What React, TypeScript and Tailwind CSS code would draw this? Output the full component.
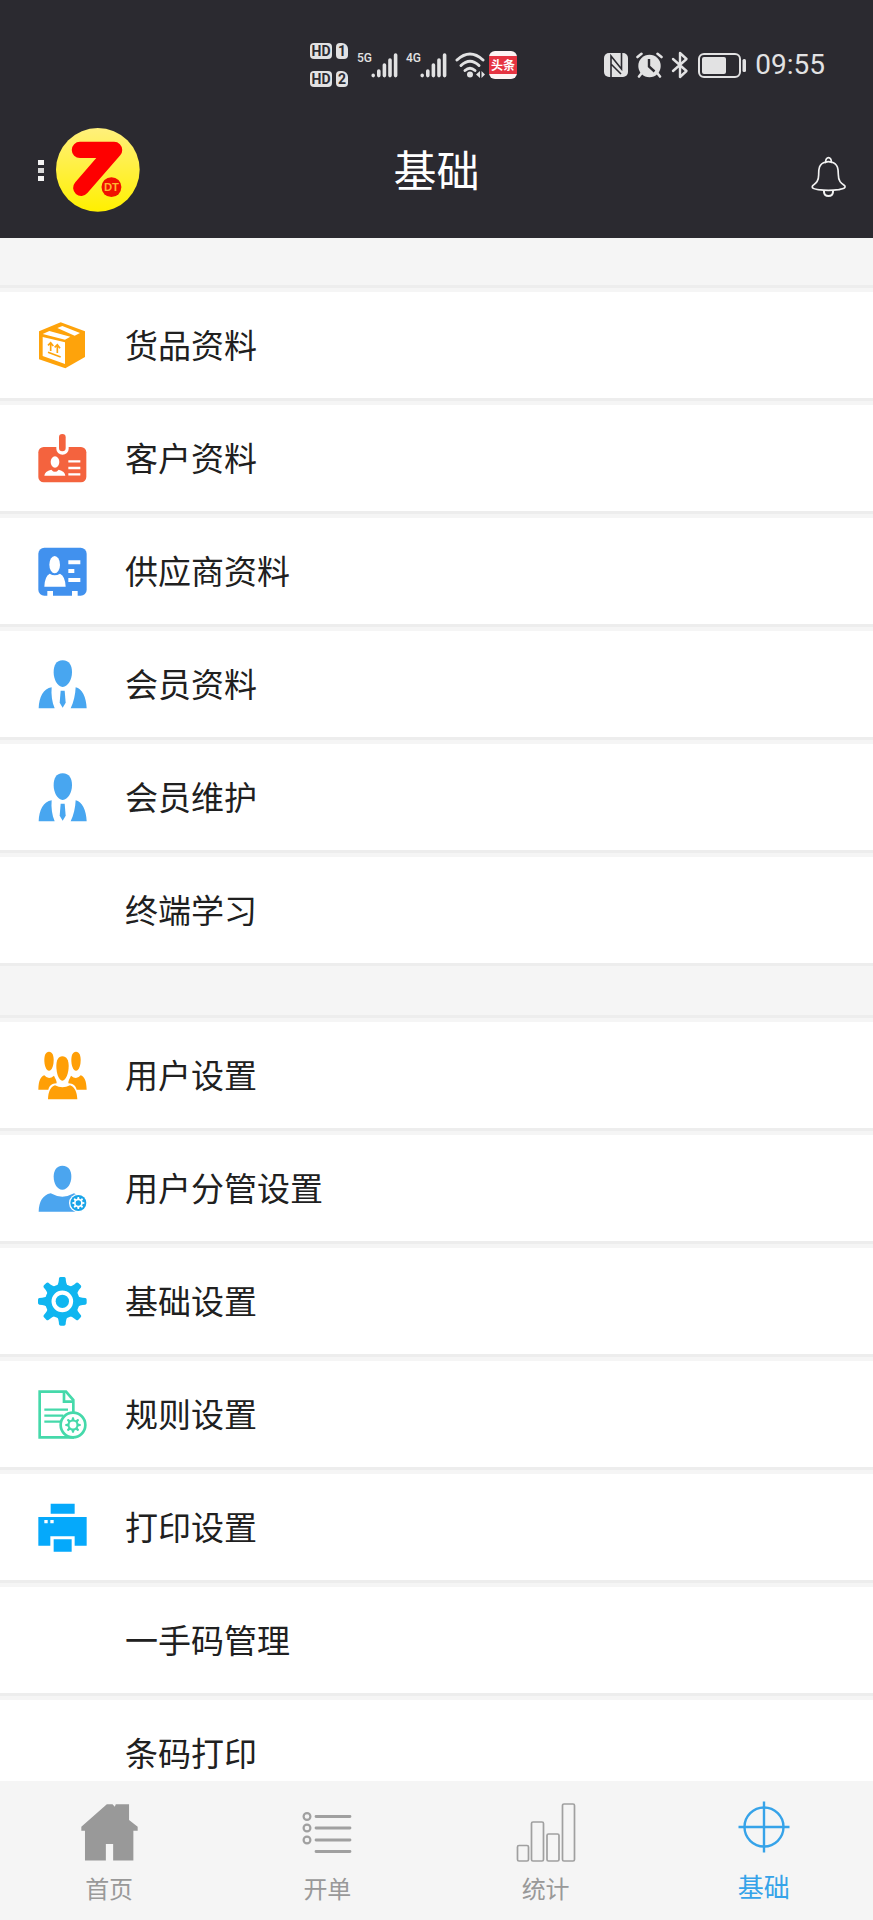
import { FC, ReactNode } from "react";

interface IconProps {
  children: ReactNode
}

const MenuIcon: FC<IconProps> = ({ children }) => (
  <svg viewBox="0 0 147 147" className="size-[49px] shrink-0" aria-hidden="true">
    {children}
  </svg>
);

interface GearProps {
  cx: number
  cy: number
  scale: number
  color: string
}

const ANGLES = [0, 45, 90, 135, 180, 225, 270, 315];

const GearShape: FC<GearProps> = ({ cx, cy, scale, color }) => (
  <g transform={`translate(${cx} ${cy}) scale(${scale})`}>
    <circle r="42" fill="none" stroke={color} strokeWidth="19" />
    {ANGLES.map((angle) => (
      <path
        key={angle}
        transform={`rotate(${angle})`}
        d="M-17 -46 Q-11 -50 -10 -69 Q-9 -73 -5 -73 H5 Q9 -73 10 -69 Q11 -50 17 -46Z"
        fill={color}
      />
    ))}
  </g>
);

const GoodsIcon = () => (
  <MenuIcon>
    <path d="M68 4 L141 31 V108 L82 142 L3 115 V31Z" fill="#fea30b" />
    <path d="M14 48 L81 64 V129 L14 105Z" fill="#fff" />
    <path d="M14 39 L34 30 L97 47 L81 56Z M58 21 L73 15 L126 36 L110 44Z" fill="#fff" />
    <g stroke="#fea30b" strokeWidth="5" fill="none">
      <path d="M38 90 V66 M30 73 L38 65 L46 75 M58 96 V73 M50 79 L58 71 L66 82 M30 94 L68 108" />
    </g>
  </MenuIcon>
);

const CustomerIcon = () => (
  <MenuIcon>
    <rect x="1" y="39" width="144" height="106" rx="16" fill="#f4633e" />
    <path d="M55 36 H92 V44 A18 18 0 0 1 55 44Z" fill="#fff" />
    <rect x="63" y="0" width="20" height="52" rx="10" fill="#f4633e" />
    <ellipse cx="51" cy="84" rx="13" ry="17" fill="#fff" />
    <path d="M19 125 Q20 112 40 107 Q51 120 62 107 Q81 112 82 125Z" fill="#fff" />
    <path d="M91 82 H127 M91 102 H127 M91 121 H127" stroke="#fff" strokeWidth="7" />
  </MenuIcon>
);

const SupplierIcon = () => (
  <MenuIcon>
    <rect x="1" y="2" width="145" height="144" rx="18" fill="#4191ee" />
    <ellipse cx="50" cy="53" rx="16" ry="26" fill="#fff" />
    <path d="M19 119 Q20 88 35 80 Q50 90 66 80 Q82 88 83 119Z" fill="#fff" />
    <path d="M91 46 H127 M91 72 H109 M91 99 H127" stroke="#fff" strokeWidth="12" />
    <path d="M28 132 H45 V147 H28Z M102 132 H119 V147 H102Z" fill="#fff" />
  </MenuIcon>
);

const MemberIcon = () => (
  <MenuIcon>
    <g fill="#48a6f0">
      <path d="M74 1 C94 1 102 17 102 37 C102 58 90 81 74 81 C58 81 47 58 47 37 C47 17 54 1 74 1Z" />
      <path d="M2 145 C3 112 16 86 41 82 C39 104 42 127 50 145Z" />
      <path d="M146 145 C145 112 132 86 113 82 C112 104 107 127 98 145Z" />
      <path d="M68 92 H80 L83 128 L74 143 L65 128Z" />
    </g>
  </MenuIcon>
);

const UsersIcon = () => (
  <MenuIcon>
    <g fill="#ff9f06">
      <path d="M33 2 C43 2 47 13 47 27 C47 43 42 59 33 59 C24 59 19 43 19 27 C19 13 23 2 33 2Z" />
      <path d="M114 2 C124 2 128 13 128 27 C128 43 123 59 114 59 C105 59 100 43 100 27 C100 13 104 2 114 2Z" />
      <path d="M73 16 C86 16 92 28 92 45 C92 66 84 89 73 89 C62 89 55 66 55 45 C55 28 61 16 73 16Z" />
      <path d="M1 116 C2 88 8 77 19 73 Q32 89 48 74 C52 83 57 90 56 97 C41 98 35 103 31 116Z" />
      <path d="M146 116 C145 88 139 77 128 73 Q115 89 99 74 C95 83 90 90 91 97 C106 98 112 103 116 116Z" />
      <path d="M30 145 C31 122 37 108 51 103 Q73 115 96 103 C110 108 117 122 118 145Z" />
    </g>
  </MenuIcon>
);

const UserGearIcon = () => (
  <MenuIcon>
    <path d="M73 5 C93 5 100 20 100 38 C100 57 89 77 73 77 C57 77 47 57 47 38 C47 20 55 5 73 5Z" fill="#4ba5ef" />
    <path d="M2 143 C3 113 14 93 38 88 Q73 108 108 88 L130 100 V143Z" fill="#4ba5ef" />
    <circle cx="121" cy="117" r="28" fill="#fff" />
    <circle cx="121" cy="117" r="24" fill="#19a4e8" />
    <GearShape cx={121} cy={117} scale={0.25} color="#fff" />
  </MenuIcon>
);

const SettingsIcon = () => (
  <MenuIcon>
    <GearShape cx={73} cy={73} scale={1} color="#10b6f0" />
    <circle cx="73" cy="73" r="20" fill="#10b6f0" />
  </MenuIcon>
);

const RuleIcon = () => (
  <MenuIcon>
    <g fill="none" stroke="#45d9aa" strokeWidth="8">
      <path d="M108 142 H5 V5 H84 L106 30 V68" />
      <path d="M78 5 V35 H106" />
      <path d="M19 59 H90 M19 77 H76 M19 95 H66" strokeWidth="7" />
      <circle cx="105" cy="105" r="37" fill="#fff" />
    </g>
    <GearShape cx={105} cy={105} scale={0.32} color="#45d9aa" />
  </MenuIcon>
);

const PrinterIcon = () => (
  <MenuIcon>
    <g fill="#05a9fb">
      <path d="M38 2 H110 V32 H38Z M1 42 H146 V128 H110 V100 H37 V128 H1Z M47 109 H101 V146 H47Z" />
    </g>
    <path d="M19 51 H29 V61 H19Z M37 51 H47 V61 H37Z" fill="#fff" />
  </MenuIcon>
);

interface MenuItem {
  label: string
  icon?: ReactNode
}

const archiveItems: MenuItem[] = [
  { label: "货品资料", icon: <GoodsIcon /> },
  { label: "客户资料", icon: <CustomerIcon /> },
  { label: "供应商资料", icon: <SupplierIcon /> },
  { label: "会员资料", icon: <MemberIcon /> },
  { label: "会员维护", icon: <MemberIcon /> },
  { label: "终端学习" },
];

const settingItems: MenuItem[] = [
  { label: "用户设置", icon: <UsersIcon /> },
  { label: "用户分管设置", icon: <UserGearIcon /> },
  { label: "基础设置", icon: <SettingsIcon /> },
  { label: "规则设置", icon: <RuleIcon /> },
  { label: "打印设置", icon: <PrinterIcon /> },
  { label: "一手码管理" },
  { label: "条码打印" },
];

const MenuList: FC<{ items: MenuItem[] }> = ({ items }) => (
  <ul className="border-t-3 border-[#ededed]">
    {items.map((item) => (
      <li key={item.label} className="mt-1 border-b-3 border-[#ededed] bg-white">
        <a href="#" className="flex h-[106px] items-center gap-[38px] pl-[38px] text-[33px] leading-10 text-[#202020]">
          {item.icon ?? <span className="size-[49px] shrink-0" />}
          <span className="pb-[3px]">{item.label}</span>
        </a>
      </li>
    ))}
  </ul>
);

const HdBadge: FC<{ sim: string }> = ({ sim }) => (
  <div className="flex gap-1 font-[Roboto,sans-serif] text-sm leading-4 font-bold text-[#2b2a30]">
    <span className="w-[22px] rounded-sm bg-[#e2e2e3] text-center">HD</span>
    <span className="w-3 rounded-sm rounded-tr-md bg-[#e2e2e3] text-center">{sim}</span>
  </div>
);

const Signal: FC<{ network: string }> = ({ network }) => (
  <div className="flex h-[26px] items-start">
    <span className="w-[14px] font-[Roboto,sans-serif] text-xs leading-3 font-medium">{network}</span>
    <svg viewBox="0 0 27 26" className="h-[26px] w-[27px]" aria-hidden="true">
      <g stroke="currentColor" strokeWidth="3.6" strokeLinecap="round">
        <path d="M2.2 23.4 V23.6 M7.8 19 V23.6 M13.4 13 V23.6 M19 8 V23.6 M24.6 3 V23.6" />
      </g>
    </svg>
  </div>
);

const StatusBar = () => (
  <div className="flex h-[74px] items-center justify-between pr-[48px] pl-[310px] text-[#e2e2e3]">
    <div className="flex items-center gap-2">
      <div className="mr-px flex flex-col gap-3">
        <HdBadge sim="1" />
        <HdBadge sim="2" />
      </div>
      <Signal network="5G" />
      <Signal network="4G" />
      <svg viewBox="0 0 30 26" className="h-[26px] w-[30px]" aria-hidden="true">
        <g fill="none" stroke="currentColor" strokeWidth="3" strokeLinecap="round">
          <path d="M2 8 Q15 -4 28 8" />
          <path d="M6 13.5 Q15 5 24 13.5" />
          <path d="M10 18.5 Q15 14 20 18.5" />
        </g>
        <circle cx="15" cy="22.5" r="3" fill="currentColor" />
        <path d="M25 19 V26 L21 22.5Z M26.5 19 L30 22.5 L26.5 26Z" fill="currentColor" />
      </svg>
      <span className="-ml-1 flex size-7 items-center rounded-md bg-[#fdf3f3]">
        <span className="w-full bg-[#e63341] text-center text-xs leading-[18px] font-bold text-white">头条</span>
      </span>
    </div>
    <div className="flex items-center gap-2">
      <svg viewBox="0 0 24 26" className="h-[26px] w-6" aria-hidden="true">
        <rect x="0" y="1" width="24" height="24" rx="5" fill="currentColor" />
        <path d="M7 25 V4 L17.5 17 V1 M7 12 L17 22" fill="none" stroke="#2b2a30" strokeWidth="1.6" />
      </svg>
      <svg viewBox="0 0 27 26" className="h-[26px] w-[27px]" aria-hidden="true">
        <circle cx="13.5" cy="14" r="11.2" fill="currentColor" />
        <path d="M1.5 5 L5.5 1.8 M21.5 1.8 L25.5 5 M5 22 L3 24.5 M22 22 L24 24.5" stroke="currentColor" strokeWidth="2.6" strokeLinecap="round" />
        <path d="M13 7 V14.5 L18.5 19.5" fill="none" stroke="#2b2a30" strokeWidth="2.4" />
      </svg>
      <svg viewBox="0 0 18 28" className="h-7 w-[18px]" aria-hidden="true">
        <path d="M2 8 L15.5 20 L9 26 V2 L15.5 8 L2 20" fill="none" stroke="currentColor" strokeWidth="2.4" strokeLinecap="round" strokeLinejoin="round" />
      </svg>
      <svg viewBox="0 0 50 26" className="h-[26px] w-[50px]" aria-hidden="true">
        <rect x="2" y="2" width="41" height="23" rx="5" fill="none" stroke="currentColor" strokeWidth="2" />
        <rect x="5" y="5" width="24" height="17" rx="2" fill="currentColor" />
        <rect x="45.5" y="7" width="3.5" height="13" rx="1.5" fill="currentColor" />
      </svg>
      <time className="font-[Roboto,sans-serif] text-[28px] leading-8">09:55</time>
    </div>
  </div>
);

const Logo = () => (
  <svg viewBox="0 0 253 253" className="size-[84px]" aria-hidden="true">
    <defs>
      <linearGradient id="logo-bg" x1="0" y1="0" x2="0" y2="1">
        <stop offset="0" stopColor="#fff07c" />
        <stop offset="1" stopColor="#fff000" />
      </linearGradient>
    </defs>
    <circle cx="126" cy="126" r="126" fill="url(#logo-bg)" />
    <path d="M72 66 H175 L76 180" fill="none" stroke="#fe0000" strokeWidth="49" strokeLinecap="round" strokeLinejoin="round" />
    <path d="M160 66 H175 L76 180 L110 110Z" fill="#fe0000" />
    <circle cx="167" cy="178" r="30" fill="#f01000" />
    <text x="167" y="190" textAnchor="middle" fontSize="34" fontWeight="700" className="font-['Liberation_Sans',sans-serif]" fill="#ffb52e">DT</text>
  </svg>
);

const Header = () => (
  <header className="shrink-0 bg-[#2b2a30] pt-7">
    <StatusBar />
    <div className="grid h-[136px] grid-cols-3 items-center">
      <button type="button" aria-label="菜单" className="ml-[38px] flex items-center gap-3 justify-self-start">
        <span className="flex flex-col gap-[3px]">
          <span className="h-[5px] w-[6px] bg-[#f3f3f3]" />
          <span className="h-[5px] w-[6px] bg-[#d8d8d8]" />
          <span className="h-[5px] w-[6px] bg-[#f3f3f3]" />
        </span>
        <Logo />
      </button>
      <h1 className="pb-1 text-center text-[43px] leading-[50px] text-white">基础</h1>
      <button type="button" aria-label="消息" className="mr-[27px] justify-self-end pt-3">
        <svg viewBox="0 0 105 123" className="h-[41px] w-[35px]" fill="none" stroke="#f2f2f2" strokeWidth="5" aria-hidden="true">
          <path d="M44 18 C22 23 23 43 23 56 C23 77 14 82 5 89 C0 98 12 99 22 101 Q52 105 83 101 C93 99 106 98 101 89 C91 82 82 77 82 56 C82 43 82 23 61 18" />
          <path d="M44 19 C43 0 62 0 61 19 Q52 15 44 19Z" />
          <path d="M39 103 V108 C40 124 65 124 66 108 V103" strokeWidth="6" />
        </svg>
      </button>
    </div>
  </header>
);

const TabHomeIcon = () => (
  <svg viewBox="0 0 172 174" className="h-[58px] w-[57px]" fill="#999" aria-hidden="true">
    <path d="M78 3 H95 L102 11 L105 3 H145 V51 L171 71 V83 H158 V173 H97 V123 H75 V173 H12 V83 H1 V71Z" />
  </svg>
);

const TabOrderIcon = () => (
  <svg viewBox="0 0 50 58" className="h-[58px] w-[50px]" fill="none" stroke="#a0a0a0" strokeLinecap="round" aria-hidden="true">
    <path d="M14 13.5 H48 M14 25 H48 M14 37 H48 M14 48.5 H48" strokeWidth="2.8" />
    <g strokeWidth="2.2">
      <circle cx="5" cy="13.5" r="3.4" />
      <circle cx="5" cy="25" r="3.4" />
      <circle cx="5" cy="37" r="3.4" />
    </g>
  </svg>
);

const TabStatsIcon = () => (
  <svg viewBox="0 0 60 60" className="h-[60px] w-[60px]" fill="none" stroke="#a0a0a0" strokeWidth="1.7" aria-hidden="true">
    <rect x="1.5" y="43.5" width="11" height="15.5" rx="1.5" />
    <rect x="15.5" y="20" width="12" height="39" rx="1.5" />
    <rect x="31" y="32" width="12" height="27" rx="1.5" />
    <rect x="46.5" y="2" width="12" height="57" rx="1.5" />
  </svg>
);

const TabBaseIcon = () => (
  <svg viewBox="0 0 52 52" className="size-[52px]" fill="none" stroke="#36a3e9" strokeWidth="2.4" aria-hidden="true">
    <circle cx="26" cy="26" r="19.5" />
    <path d="M26 0.5 V51.5 M0.5 26 H51.5" />
  </svg>
);

const tabs = [
  { label: "首页", icon: <TabHomeIcon />, active: false },
  { label: "开单", icon: <TabOrderIcon />, active: false },
  { label: "统计", icon: <TabStatsIcon />, active: false },
  { label: "基础", icon: <TabBaseIcon />, active: true },
];

const TabBar = () => (
  <nav className="grid shrink-0 grid-cols-4 bg-[#f5f5f5] pt-5 pb-[14px]">
    {tabs.map((tab) => (
      <a
        key={tab.label}
        href="#"
        aria-current={tab.active ? "page" : undefined}
        className={`flex flex-col items-center ${tab.active ? "gap-[15px] text-[26px] text-[#36a3e9]" : "gap-[7px] text-2xl text-[#999]"}`}
      >
        <span className={`flex items-center ${tab.active ? "h-[52px]" : "h-[62px]"}`}>{tab.icon}</span>
        <span className="leading-9">{tab.label}</span>
      </a>
    ))}
  </nav>
);

const App = () => (
  <div className="flex h-screen flex-col bg-[#f5f5f5] font-['Noto_Sans_CJK_SC',sans-serif]">
    <Header />
    <main className="min-h-0 flex-1 space-y-[49px] overflow-y-auto pt-[47px] [scrollbar-width:none]">
      <MenuList items={archiveItems} />
      <MenuList items={settingItems} />
    </main>
    <TabBar />
  </div>
);

export default App;
